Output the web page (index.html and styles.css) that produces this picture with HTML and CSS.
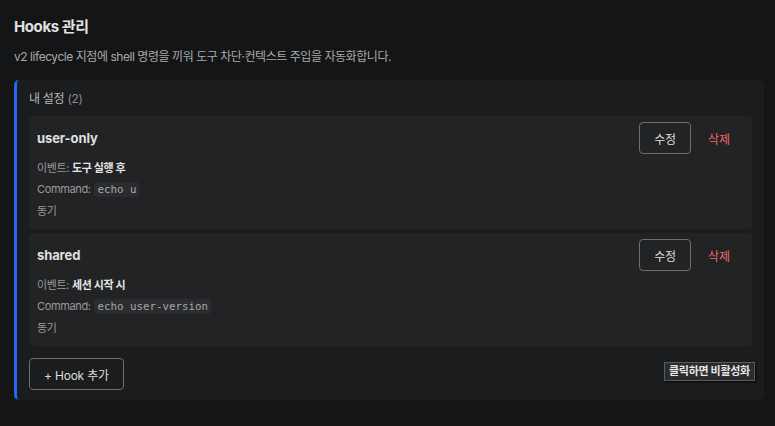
FILE: index.html
```html
<!DOCTYPE html>
<html lang="ko">
<head>
<meta charset="utf-8">
<link rel="stylesheet" href="styles.css">
</head>
<body>
<div class="page">
  <h2 class="title">Hooks 관리</h2>
  <p class="desc">v2 lifecycle 지점에 shell 명령을 끼워 도구 차단·컨텍스트 주입을 자동화합니다.</p>
  <section class="panel">
    <div class="panel-head">내 설정 <span class="count">(2)</span></div>
    <div class="cards">
      <div class="card">
        <div class="card-head">
          <span class="name">user-only</span>
          <div class="actions">
            <button class="btn">수정</button>
            <button class="del">삭제</button>
          </div>
        </div>
        <div class="line">이벤트: <b>도구 실행 후</b></div>
        <div class="line">Command: <code>echo u</code></div>
        <div class="line sync">동기</div>
      </div>
      <div class="card">
        <div class="card-head">
          <span class="name">shared</span>
          <div class="actions">
            <button class="btn">수정</button>
            <button class="del">삭제</button>
          </div>
        </div>
        <div class="line">이벤트: <b>세션 시작 시</b></div>
        <div class="line">Command: <code>echo user-version</code></div>
        <div class="line sync">동기</div>
      </div>
    </div>
    <button class="btn add">+ Hook 추가</button>
    <div class="tooltip">클릭하면 비활성화</div>
  </section>
</div>
</body>
</html>
```
FILE: styles.css
```css
html, body {
  margin: 0;
  background: #141516;
}
body {
  font-family: Inter, "Noto Sans CJK KR", sans-serif;
  color: #ddd;
}
.page {
  padding: 17px 11px 0 14px;
}
.title {
  margin: 0;
  font-size: 15px;
  line-height: 20px;
  font-weight: 700;
  color: #e2e2e2;
  letter-spacing: -0.4px;
}
.desc {
  margin: 12px 0 0;
  font-size: 12px;
  line-height: 16px;
  color: #a9a9a9;
  letter-spacing: -0.45px;
}
.panel {
  position: relative;
  margin-top: 15px;
  background: #1b1c1e;
  border-left: 3px solid #2a66f0;
  border-radius: 5px;
  padding: 11px 12px 10px 12px;
}
.panel-head {
  font-size: 12px;
  line-height: 16px;
  color: #b8b8b8;
  margin-bottom: 9px;
  letter-spacing: -0.3px;
}
.count {
  color: #8a8a8a;
}
.cards {
  display: flex;
  flex-direction: column;
  gap: 4px;
}
.card {
  background: #222325;
  border-radius: 4px;
  padding: 6px 11px 10px 8px;
}
.card-head {
  display: flex;
  align-items: center;
  justify-content: space-between;
  margin-bottom: 6px;
}
.name {
  font-size: 13px;
  font-weight: 700;
  color: #e0e0e0;
  letter-spacing: -0.1px;
}
.actions {
  display: flex;
  align-items: center;
  gap: 8px;
}
.btn {
  font-family: inherit;
  font-size: 12px;
  color: #dcdcdc;
  background: transparent;
  border: 1px solid #6e6e6e;
  border-radius: 4px;
  height: 32px;
  padding: 0 14px;
  cursor: pointer;
  letter-spacing: -0.2px;
}
.del {
  font-family: inherit;
  font-size: 12px;
  color: #f26464;
  background: transparent;
  border: none;
  height: 32px;
  padding: 0 11px 0 9px;
}
.line {
  font-size: 11px;
  line-height: 16px;
  color: #9a9a9a;
  margin-top: 5px;
  letter-spacing: -0.35px;
}
.line b {
  color: #e4e4e4;
  font-weight: 700;
}
.line.sync {
  margin-top: 5px;
}
code {
  font-family: "DejaVu Sans Mono", "Liberation Mono", monospace;
  font-size: 10.8px;
  letter-spacing: 0;
  color: #a8a8a8;
  background: #2b2c2f;
  border-radius: 3px;
  padding: 1px 3px;
  margin-left: 1px;
}
.add {
  margin-top: 12px;
  padding: 0 14px;
}
.tooltip {
  position: absolute;
  left: 647px;
  top: 282px;
  background: #2a2b2c;
  border: 1px solid #5c5c5c;
  box-shadow: 1px 1px 2px rgba(0,0,0,0.8);
  color: #e6e6e6;
  font-size: 11px;
  font-weight: 700;
  line-height: 17px;
  padding: 0 4px;
  letter-spacing: -0.3px;
  white-space: nowrap;
}
```
